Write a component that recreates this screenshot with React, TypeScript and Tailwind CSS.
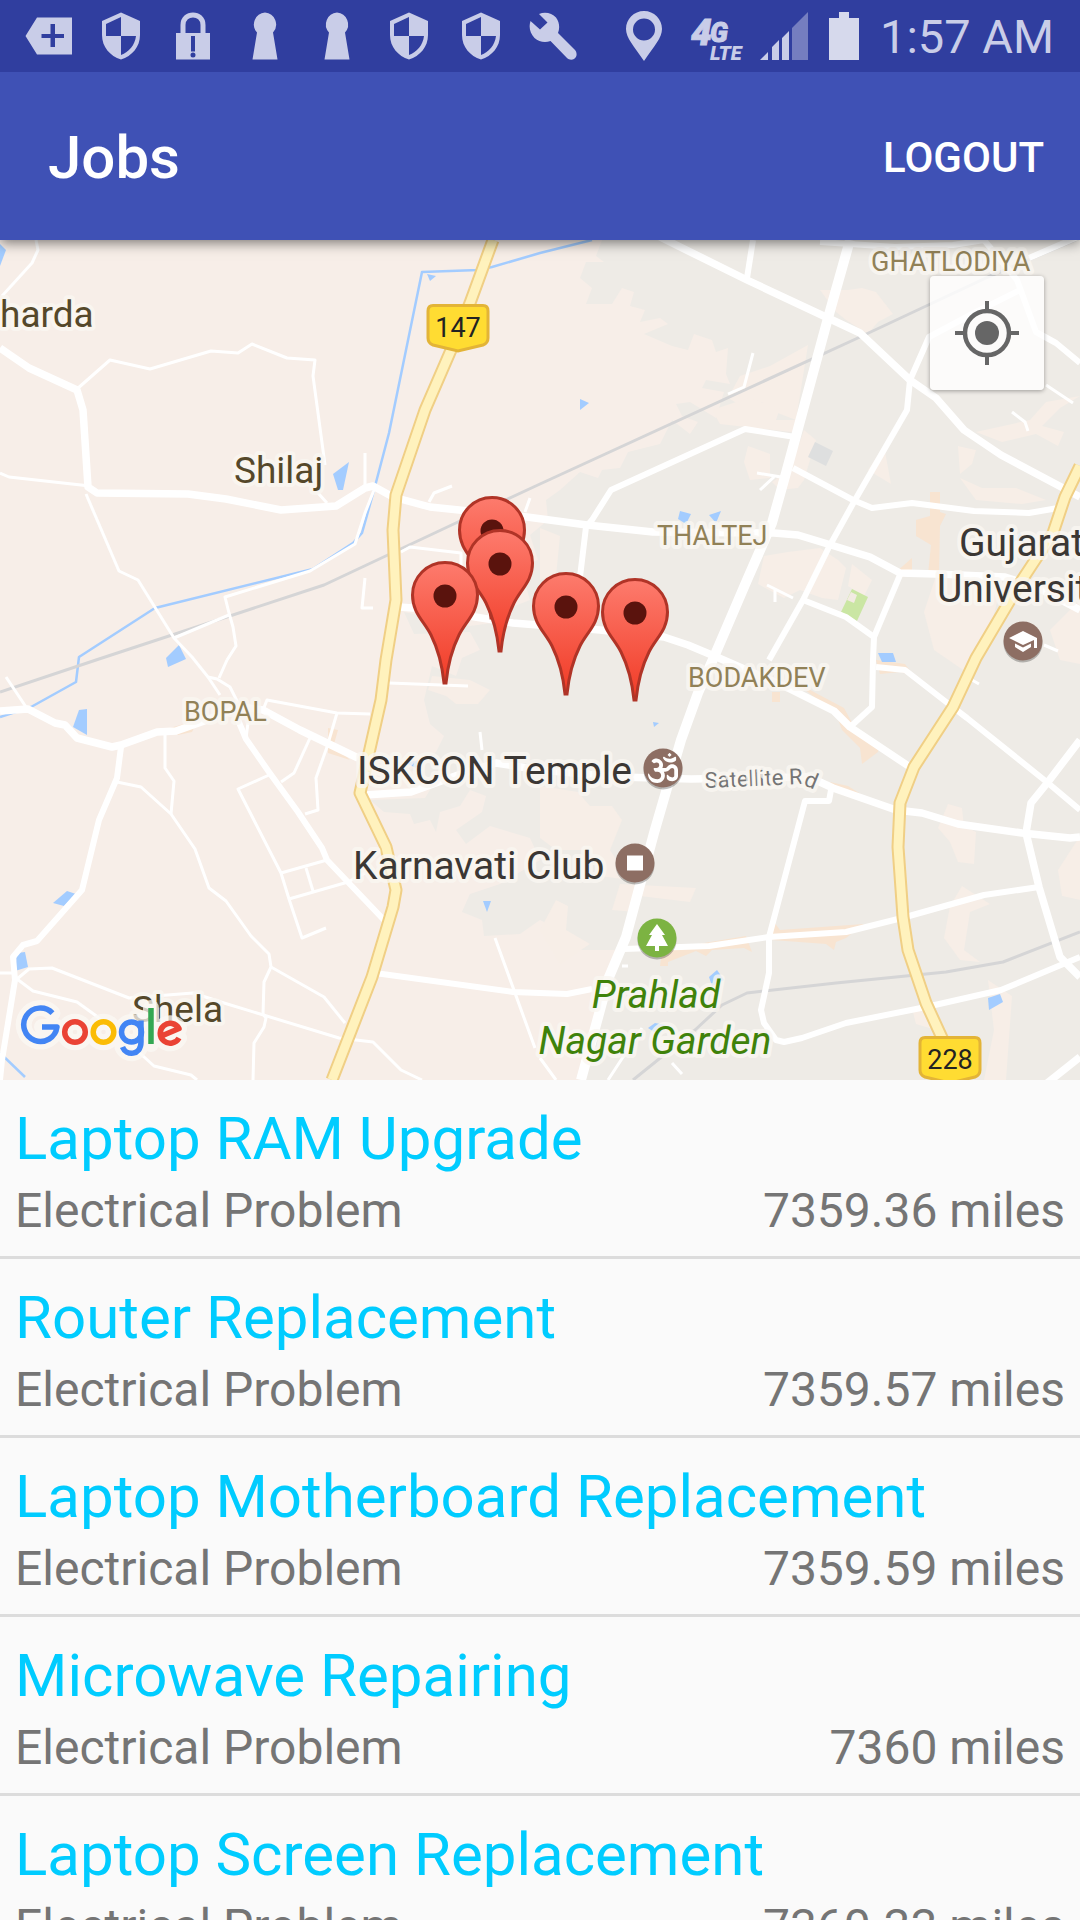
import React from "react";
import { FaOm } from "react-icons/fa";

type Job = { title: string; category: string; distance: string };

const jobs: Job[] = [
  { title: "Laptop RAM Upgrade", category: "Electrical Problem", distance: "7359.36 miles" },
  { title: "Router Replacement", category: "Electrical Problem", distance: "7359.57 miles" },
  { title: "Laptop Motherboard Replacement", category: "Electrical Problem", distance: "7359.59 miles" },
  { title: "Microwave Repairing", category: "Electrical Problem", distance: "7360 miles" },
  { title: "Laptop Screen Replacement", category: "Electrical Problem", distance: "7360.33 miles" },
];

/* ---------- Status bar ---------- */

function Shield() {
  return (
    <svg viewBox="0 0 48 48" className="size-12" fill="currentColor" aria-hidden="true">
      <path fillRule="evenodd" d="M24 0.500L43 9V23C43 35 35 44 24 47.500C13 44 5 35 5 23V9ZM24 5L9 12V24H24ZM24 24V43C32 40 38 33 39 24Z" />
    </svg>
  );
}

function Keyhole() {
  return (
    <svg viewBox="0 0 48 48" className="size-12" fill="currentColor" aria-hidden="true">
      <path d="M24 0.500A12 12 0 0 1 32 20.500L36.500 47.500H11.500L16 20.500A12 12 0 0 1 24 0.500Z" />
    </svg>
  );
}

function Tag() {
  return (
    <svg viewBox="0 0 48 48" className="size-12" fill="currentColor" aria-hidden="true">
      <path fillRule="evenodd" d="M12 5.500H47V42.500H12L0.500 24ZM25.500 12V22H16.500V26H25.500V35H30V26H39V22H30V12Z" />
    </svg>
  );
}

function Lock() {
  return (
    <svg viewBox="0 0 48 48" className="size-12" aria-hidden="true">
      <path d="M14 22V13C14 -0.500 34 -0.500 34 13V22" fill="none" stroke="currentColor" strokeWidth="5" />
      <path fill="currentColor" fillRule="evenodd" d="M7 21H41V47.500H7ZM22 24V39.500H26V24ZM24 40.500A2.500 2.500 0 1 0 24 45.500A2.500 2.500 0 1 0 24 40.500Z" />
    </svg>
  );
}

function Wrench() {
  return (
    <svg viewBox="0 0 48 48" className="size-12" fill="currentColor" aria-hidden="true">
      <path d="M10 2C16 -0.500 23 1 27 5.500C30.500 10 31 16 29 21L46 38C48.500 41 48 45 45 47C43 48 40 48 38 46L21.500 29C16 31 10 30 5.500 26C1 21.500 -0.500 15 1.500 9L11 17.500L18.500 10.500Z" />
    </svg>
  );
}

const notifications = [Tag, Shield, Lock, Keyhole, Keyhole, Shield, Shield, Wrench];

function StatusBar() {
  return (
    <div className="flex h-[72px] items-center justify-between bg-[#303e9f] pr-[26px] pl-[13px] text-[#c9cde8]">
      <div className="flex">
        {notifications.map((Icon, i) => (
          <span key={i} className="flex w-[72px] justify-center">
            <Icon />
          </span>
        ))}
      </div>
      <div className="flex items-center gap-4">
        <svg viewBox="0 0 40 50" className="h-[50px] w-10" fill="currentColor" aria-label="Location">
          <path fillRule="evenodd" d="M20 0C30 0 38 8 38 18C38 27 30 35 20 50C10 35 2 27 2 18C2 8 10 0 20 0ZM20 7.500A11 11 0 1 0 20 29.500A11 11 0 1 0 20 7.500Z" />
        </svg>
        <svg viewBox="0 -4 64 60" className="h-[60px] w-16 font-['Roboto'] font-black italic" fill="currentColor" stroke="currentColor" aria-label="4G LTE">
          <text x="11" y="35" strokeWidth="1">
            <tspan fontSize="37">4</tspan>
            <tspan x="30" y="32" fontSize="27">G</tspan>
          </text>
          <text x="30" y="50" fontSize="20" strokeWidth="0">LTE</text>
        </svg>
        <svg viewBox="0 0 48 48" className="size-12" fill="currentColor" aria-label="Signal">
          <path d="M0 48L8 40V48ZM12 48V35L19 28V48ZM22 48V26L29 19V48Z" />
          <path d="M32 48V16L48 0V48Z" opacity="0.450" />
        </svg>
        <svg viewBox="0 0 40 48" className="h-12 w-10" fill="#d6d9ec" aria-label="Battery">
          <path d="M15 0H25V6H35V48H5V6H15Z" />
        </svg>
        <span className="pt-[2px] text-[47px] leading-[56px]">1:57 AM</span>
      </div>
    </div>
  );
}

/* ---------- Map ---------- */

const city =
  "M602 240L596 256L604 262L586 262L580 278L592 288L586 304L612 304L622 288L634 292L630 306L645 310L640 322L660 318L668 324L644 334L672 346L688 350L694 334L712 340L716 352L728 348L726 374L730 384L706 380L702 388L724 392L716 418L690 402L676 404L682 416L698 422L690 434L672 420L660 444L628 452L620 468L602 470L598 478L580 472L560 490L546 500L548 520L530 535L538 560L520 566L530 600L505 610L500 622L470 626L404 612L414 634L470 632L480 650L462 658L456 676L432 666L424 700L430 724L444 736L436 752L410 770L436 780L425 798L370 800L384 812L410 814L414 824L430 820L436 832L440 812L460 806L470 790L486 796L482 812L456 830L466 844L490 826L530 838L540 860L500 884L470 894L462 912L482 920L484 936L520 934L540 920L560 930L580 950L622 950L600 1010L580 1080H1080V240Z";

const suburbs = [
  "M820 290L848 290L862 288L876 292L893 314L878 322L868 334L846 320L836 312Z",
  "M808 345L796 420L770 410L762 402L742 406L728 398L740 376L770 366Z",
  "M748 398L780 408L776 420L800 420L792 432L720 424L712 410Z",
  "M748 446L770 454L770 478L750 480L744 462Z",
  "M804 430L816 440L804 480L798 488L780 490L772 482L790 470Z",
  "M884 446L891 484L868 470Z",
  "M1080 396L1046 402L1030 420L976 432L1002 442L1036 434L1058 446L1064 432L1042 426L1060 408Z",
  "M958 446L976 450L972 464L960 474Z",
  "M960 478L982 488L1016 488L1046 500L1022 504L976 500Z",
  "M764 556L788 552L820 548L838 560L846 568L838 600L822 598L800 590L784 598L758 584Z",
  "M852 564L872 580L864 596L848 586Z",
  "M936 576L1000 590L990 630L966 672L934 650L924 612Z",
  "M1080 600L1050 630L1060 660L1080 664Z",
  "M948 804L962 808L964 826L976 832L974 864L958 862L950 842L938 828Z",
  "M962 886L990 904L970 912L964 950L980 962L960 960L944 938L950 906Z",
  "M1080 836L1058 870L1062 896L1080 900Z",
  "M988 980L1012 996L1006 1080H984L994 1030Z",
  "M540 786L578 792L590 806L612 806L622 820L610 850L630 880L600 876L590 850L556 850L540 838Z",
  "M620 884L696 888L690 902L640 896L636 912L612 910Z",
  "M556 900L568 906L566 930L590 944L560 964L540 930Z",
  "M540 528L560 536L556 576L540 580Z",
  "M432 676L470 680L490 690L478 704L456 704L446 696L428 690Z",
  "M912 1008L930 1012L936 1030L916 1024Z",
];

const commercial = [
  "M930 492H940V512L946 514L940 526L939 574H928L931 545L916 536V520L930 516Z",
  "M896 572L912 558V574L900 578Z",
  "M170 728L198 720L192 732L178 735Z",
  "M328 728L338 730L334 744L350 760L328 753Z",
  "M795 682L844 708L856 730L880 744L878 752L862 764L860 748L842 730L836 714Z",
  "M772 692H780V702H772Z",
  "M830 782L848 786L870 800L894 806L893 812L840 794Z",
  "M662 950L746 936L752 952L744 948L712 950L706 956L696 951L668 962V966H660Z",
  "M774 922L780 930L864 924L846 938L836 942L834 950L826 944L772 940Z",
  "M876 660L905 664L914 676L900 672L880 674Z",
];

const lakes = [
  "M0 244L6 250L0 266Z",
  "M427 274L436 276L430 281Z",
  "M333 474L349 462L343 490L338 490Z",
  "M166 658L179 645L186 659L168 667Z",
  "M73 727L79 710L87 709V735Z",
  "M53 903L67 891L76 894L64 906Z",
  "M15 971L17 953L25 952L28 967Z",
  "M483 901H491L487 912Z",
  "M680 511L691 514L686 524L678 519Z",
  "M709 515L721 511L716 523Z",
  "M580 399L589 403L580 410Z",
  "M653 722L659 723L654 727Z",
  "M878 653H893L896 662H882Z",
  "M988 998L1000 994L1003 1002L989 1010Z",
  "M709 977L717 970L724 980L712 986Z",
  "M648 1028L655 1023L666 1025L659 1035Z",
  "M406 763L418 760L416 768Z",
  "M1013 542L1020 533L1024 538Z",
];

const lanes = [
  "M36 240L38 250L32 263L2 296",
  "M77 389L110 360L150 369L211 351L238 353L252 344L287 358L315 360L313 376L325 465",
  "M318 493L327 503",
  "M0 473L9 477L90 486",
  "M86 494L119 571L138 580L174 638L192 657L208 677L217 679L230 687L238 703",
  "M227 660L219 678M227 660L236 646L233 627L229 613L225 597L310 571L355 544L365 513L374 490",
  "M174 638L229 615M208 677L220 695",
  "M6 677L26 707",
  "M117 782L141 787L171 814L195 849L209 888L226 901L251 936L269 954L271 967L264 982L263 1014L266 1018L264 1027L254 1043L253 1080",
  "M271 967L324 997L345 1023",
  "M165 735V768L174 781L171 814",
  "M0 973H14M17 979L29 969L52 968L129 998L193 993L224 1003L339 1038L373 1042L401 1070L422 1080",
  "M17 979L33 991L77 1002L95 1015L143 1056L154 1066L191 1075L197 1080",
  "M269 775L238 789L281 873L289 899L302 938L326 928",
  "M281 873L327 860M306 868L313 891M289 899L348 882L365 873",
  "M310 738L294 773L281 782",
  "M337 713L327 747L316 778L318 810L305 814",
  "M263 710L267 700L337 713L370 714M248 723L246 738",
  "M389 683L468 686M480 732L482 750M495 938L535 1048",
  "M365 453V485M429 502L434 493L452 486M401 552L410 547L461 553V575M365 578L362 608H373M525 512L530 498",
  "M757 473L781 477M774 477L760 490M753 353L744 387L728 394M1012 412L1025 422L1028 431M1046 385L1073 403M767 585L793 598M775 589V602",
  "M540 1058L556 1080M642 1028L608 1080M672 1063L682 1074M1044 645L1058 651M972 680L979 684M622 966H628",
];

const streets = [
  "M753 240L747 278",
  "M820 242L895 247L953 245L984 240L998 257L1017 280L1036 332L1056 343L1080 363",
  "M910 380L929 337L974 313L1020 290M1029 258L1080 236",
  "M795 437L745 429L611 490L592 520L586 527L580 577",
  "M793 468L853 500L872 508L912 503L974 511L1029 513L1058 508",
  "M900 575L874 637L873 660L872 707L850 727",
  "M803 600L846 617L874 637",
  "M876 667L905 670L950 705L967 718L1048 783L1080 810",
  "M831 790L829 801H805L769 937V973L761 1010L764 1023L776 1040L784 1042L802 1038L846 1023L926 1007L1001 990L1080 957",
  "M624 949L709 946L769 937L846 932L902 918L984 895L1039 887",
  "M375 973L513 992L567 994L592 989",
  "M121 747L117 778L99 820L82 890L37 941L23 945L13 957L15 980L2 1060L0 1080",
  "M238 720L246 739L269 772L298 812L322 848L327 860L384 920",
  "M910 380L907 410L855 500L829 547L803 600L769 660",
];

const avenues = [
  "M0 348L29 368L77 390L83 410L88 487L97 493L188 494L226 499L281 510L336 506L365 488L373 486L393 497L430 507L527 517L587 525L653 532L774 533L798 535L831 545L870 557L900 573L936 574L1005 577L1036 587L1080 610",
  "M0 711L28 709L55 723L65 725L77 738L112 747L121 745L157 732L176 731L207 720L241 707L263 710L300 730L358 758",
  "M365 795L411 792L458 775L496 763L540 770L619 777L691 779L809 777L833 788L896 810L922 813L958 824L1022 833L1070 838L1080 837",
  "M399 607L440 610L475 617L513 623L600 630L664 637L688 645L719 658L788 688L834 711L850 727L910 767",
  "M660 237L747 280L828 318L860 333L910 380L936 398L964 430L1001 455L1080 497",
  "M1080 740L1048 782L1031 803L1026 833L1039 887L1060 957L1080 977",
  "M1046 1084L1080 1057",
];

const freeway = "M850 240L828 318L786 473L772 523L747 580L714 657L698 693L681 740L654 833L626 937L609 977L581 1080";

const highways = [
  "M493 240L470 303L451 350L425 410L396 495L393 530L396 600L386 660L381 700L360 793L386 847L396 890L393 907L372 977L332 1080",
  "M1080 466L1065 497L1053 533L1022 580L976 658L953 707L914 767L900 803L898 847L903 917L908 950L926 1003L943 1040",
];

const railways = [
  "M0 692L96 660L324 585L458 522L540 484L860 337L988 277L1080 238",
  "M633 1080L695 1030L722 1005L747 993L836 983L946 972L1003 962L1080 932",
];

const pins = [
  { x: 492, y: 618 },
  { x: 500, y: 651 },
  { x: 445, y: 683 },
  { x: 566, y: 694 },
  { x: 635, y: 700 },
];

function Lines({ paths, color, width }: { paths: string[]; color: string; width: number }) {
  return (
    <g fill="none" stroke={color} strokeWidth={width} strokeLinejoin="round">
      {paths.map((d) => (
        <path key={d} d={d} />
      ))}
    </g>
  );
}

function Areas({ paths, color }: { paths: string[]; color: string }) {
  return (
    <g fill={color}>
      {paths.map((d) => (
        <path key={d} d={d} />
      ))}
    </g>
  );
}

function RouteShield({ x, y, label }: { x: number; y: number; label: string }) {
  return (
    <g transform={`translate(${x} ${y})`}>
      <path
        d="M-25 1.500H25Q30 1.500 30 7V34Q30 39 25 41L0 47L-25 41Q-30 39 -30 34V7Q-30 1.500 -25 1.500Z"
        fill="#ffdc32"
        stroke="#e3b437"
        strokeWidth="3"
      />
      <text y="33" textAnchor="middle" fontSize="27" fill="#222222">
        {label}
      </text>
    </g>
  );
}

function Poi({ x, y, color, children }: { x: number; y: number; color: string; children: React.ReactNode }) {
  return (
    <g transform={`translate(${x} ${y})`}>
      <circle cy="2" r="19.500" fill="#000000" opacity="0.250" />
      <circle r="19.500" fill={color} />
      {children}
    </g>
  );
}

function Pin({ x, y }: { x: number; y: number }) {
  return (
    <g transform={`translate(${x} ${y})`}>
      <path
        d="M-1 0C-3 -20 -7 -34 -14 -48C-21 -62 -32.500 -70 -32.500 -88A32.500 32.500 0 0 1 32.500 -88C32.500 -70 21 -62 14 -48C7 -34 3 -20 1 0Z"
        fill="url(#pinFill)"
        stroke="#b03427"
        strokeWidth="3"
      />
      <circle cy="-87" r="11.500" fill="#5a130d" />
    </g>
  );
}

function GoogleMark({ halo }: { halo?: boolean }) {
  const c = (color: string) => (halo ? "#fbf9f5" : color);
  return (
    <g fill="none" strokeWidth={halo ? 16 : 5.5} strokeLinejoin="round" strokeLinecap={halo ? "round" : "butt"} opacity={halo ? 0.75 : 1}>
      <path d="M52.500 1013.200A16.700 16.700 0 1 0 57 1027H42" stroke={c("#4285f4")} />
      <circle cx="75" cy="1032" r="10.300" stroke={c("#ea4335")} />
      <circle cx="103.500" cy="1032" r="10.300" stroke={c("#fbbc05")} />
      <circle cx="131.500" cy="1032" r="10" stroke={c("#4285f4")} />
      <path d="M141 1020.500V1042C141 1056 126 1056 122.500 1047" stroke={c("#4285f4")} />
      <path d="M151 1008V1044" stroke={c("#34a853")} />
      <path d="M161.500 1036L179 1028.500A10 10 0 1 0 179 1038" stroke={c("#ea4335")} />
    </g>
  );
}

function JobsMap() {
  return (
    <section className="relative" aria-label="Job locations">
      <svg viewBox="0 240 1080 840" className="block h-auto w-full font-['Roboto']" role="img" aria-label="Map">
        <defs>
          <linearGradient id="pinFill" x1="0" y1="0" x2="0" y2="1">
            <stop offset="0" stopColor="#fd7b6d" />
            <stop offset="1" stopColor="#f13b26" />
          </linearGradient>
          <path id="satelliteRoad" d="M705 788L801 784L830 796" />
        </defs>
        <rect y="240" width="1080" height="840" fill="#f7eee8" />
        <path d={city} fill="#eeebe6" />
        <Areas paths={suburbs} color="#f7eee7" />
        <Areas paths={commercial} color="#f8e4d1" />
        <path d="M852 589L868 597L857 621L841 612Z" fill="#cae6a3" />
        <path d="M851 592L857 595L854 603L847 600Z" fill="#f2ebe2" />
        <path d="M815 442L833 451L826 466L808 457Z" fill="#dedfdf" />
        <Areas paths={lakes} color="#a3ccff" />
        <Lines
          paths={["M592 240L540 253L492 267L478 270L422 272L389 433L374 490L362 533L353 543L313 569L155 608L79 657L76 682L31 707L0 717", "M0 1053L25 1077"]}
          color="#a3ccff"
          width={2.5}
        />
        <Lines paths={railways} color="#d5d5d6" width={3} />
        <Lines paths={lanes} color="#ffffff" width={3} />
        <Lines paths={streets} color="#ffffff" width={6} />
        <Lines paths={avenues} color="#ffffff" width={7.5} />
        <Lines paths={[freeway]} color="#ffffff" width={10} />
        <Lines paths={highways} color="#f0cf85" width={13} />
        <Lines paths={highways} color="#fff2bd" width={9} />

        <RouteShield x={458} y={304} label="147" />
        <RouteShield x={950} y={1036} label="228" />

        <g stroke="#faf7f2" strokeOpacity="0.800" strokeWidth="8" strokeLinejoin="round" style={{ paintOrder: "stroke" }}>
          <g fontSize="37" fill="#55482a">
            <text x="0" y="327">harda</text>
            <text x="234" y="483">Shilaj</text>
            <text x="132" y="1022">Shela</text>
          </g>
          <g fontSize="27" fill="#918157">
            <text x="871" y="271">GHATLODIYA</text>
            <text x="657" y="545">THALTEJ</text>
            <text x="688" y="687">BODAKDEV</text>
            <text x="184" y="721">BOPAL</text>
          </g>
          <g fontSize="39" fill="#3b3734">
            <text x="357" y="784">ISKCON Temple</text>
            <text x="353" y="879">Karnavati Club</text>
            <text x="959" y="556">Gujarat</text>
            <text x="937" y="602">Universit</text>
          </g>
          <g fontSize="39" fontStyle="italic" fill="#3f820a" textAnchor="middle">
            <text x="656" y="1008">Prahlad</text>
            <text x="655" y="1054">Nagar Garden</text>
          </g>
          <text fontSize="22" fill="#757575">
            <textPath href="#satelliteRoad">Satellite Rd</textPath>
          </text>
        </g>

        <Poi x={663} y={768} color="#8d6e63">
          <FaOm x={-15} y={-15} size={30} color="#ffffff" />
        </Poi>
        <Poi x={635} y={863} color="#8d6e63">
          <rect x="-8" y="-7.500" width="16" height="15" fill="#ffffff" />
        </Poi>
        <Poi x={657} y={938} color="#7cb342">
          <path d="M0 -14L8 -3H5L11 8H2V13H-2V8H-11L-5 -3H-8Z" fill="#ffffff" />
        </Poi>
        <Poi x={1023} y={641} color="#8d6e63">
          <path d="M0 -10L14 -3V7H11V-1L0 4L-14 -3ZM-8 2.500L0 6.500L8 2.500V6L0 11L-8 6Z" fill="#ffffff" />
        </Poi>

        {pins.map((pin) => (
          <Pin key={pin.x} x={pin.x} y={pin.y} />
        ))}

        <g role="img" aria-label="Google">
          <GoogleMark halo />
          <GoogleMark />
        </g>
      </svg>
      <button
        type="button"
        aria-label="My location"
        className="absolute top-9 right-9 flex size-[114px] items-center justify-center rounded-[4px] bg-white/80 shadow-[0_1px_4px_rgba(0,0,0,0.35)]"
      >
        <svg viewBox="0 0 64 64" className="size-16" aria-hidden="true">
          <circle cx="32" cy="32" r="22" fill="none" stroke="#666666" strokeWidth="4.500" />
          <circle cx="32" cy="32" r="12" fill="#666666" />
          <path d="M32 0V9M32 55V64M0 32H9M55 32H64" stroke="#666666" strokeWidth="4" />
        </svg>
      </button>
    </section>
  );
}

/* ---------- Page ---------- */

export default function App() {
  return (
    <div className="flex h-screen flex-col overflow-hidden bg-[#fafafa] font-['Roboto',sans-serif]">
      <header className="relative z-10 shadow-[0_3px_12px_rgba(0,0,0,0.5)]">
        <StatusBar />
        <div className="flex h-[168px] items-center justify-between bg-[#3f51b5] pt-1 pr-9 pl-12 font-medium text-white">
          <h1 className="text-[60px] leading-[70px]">Jobs</h1>
          <button type="button" className="text-[42px] leading-[50px] font-medium">
            LOGOUT
          </button>
        </div>
      </header>
      <main className="flex min-h-0 flex-1 flex-col">
        <div className="shrink-0">
          <JobsMap />
        </div>
        <ul className="min-h-0 flex-1 overflow-hidden">
          {jobs.map((job) => (
            <li key={job.title} className="border-b-[3px] border-[#dcdcdc] px-[15px] pt-6 pb-[17px]">
              <h2 className="text-[60px] leading-[70px] text-[#00ccff]">{job.title}</h2>
              <div className="mt-[9px] flex justify-between text-[48px] leading-[56px] text-[#757575]">
                <span>{job.category}</span>
                <span>{job.distance}</span>
              </div>
            </li>
          ))}
        </ul>
      </main>
    </div>
  );
}
